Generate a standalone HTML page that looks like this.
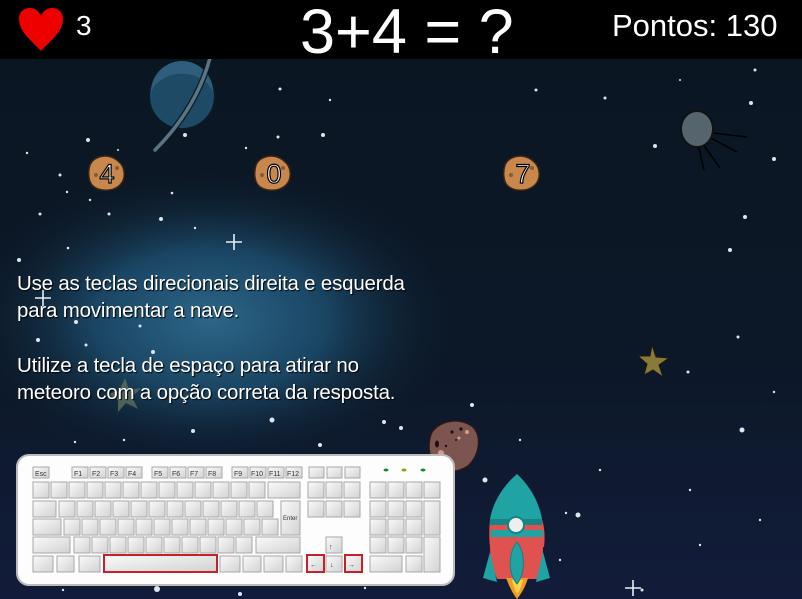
<!DOCTYPE html>
<html><head><meta charset="utf-8"><style>
html,body{margin:0;padding:0;width:802px;height:599px;overflow:hidden;background:#0b1622;font-family:"Liberation Sans",sans-serif}
#bg{position:absolute;left:0;top:0}
.hdr{position:absolute;left:0;top:0;width:802px;height:59px;background:#000;color:#fff;overflow:hidden}
.t{position:absolute;color:#fff;white-space:nowrap}
.txt{position:absolute;left:17px;color:#fff;font-size:20.5px;letter-spacing:-0.2px;text-shadow:1px 1px 1px #000;line-height:27px;white-space:nowrap}
</style></head><body>
<svg id="bg" width="802" height="599" viewBox="0 0 802 599">
<defs>
<radialGradient id="glow" cx="210" cy="320" r="260" gradientUnits="userSpaceOnUse" gradientTransform="translate(210 320) scale(1 0.6) translate(-210 -320)">
<stop offset="0" stop-color="#2c6688"/><stop offset="0.45" stop-color="#1a4563"/><stop offset="1" stop-color="#0b1622" stop-opacity="0"/></radialGradient>
<linearGradient id="sky" x1="0" y1="0" x2="0" y2="1"><stop offset="0" stop-color="#0b1622"/><stop offset="0.6" stop-color="#0c1828"/><stop offset="1" stop-color="#121c3a"/></linearGradient>
<linearGradient id="key" x1="0" y1="0" x2="1" y2="1"><stop offset="0" stop-color="#fafafa"/><stop offset="1" stop-color="#d2d2d2"/></linearGradient>
</defs>
<rect width="802" height="599" fill="url(#sky)"/>
<rect width="802" height="599" fill="url(#glow)"/>
<g fill="#dfe6ea">
<circle cx="60" cy="175" r="1.5"/><circle cx="90" cy="200" r="1.2"/><circle cx="88" cy="140" r="2"/><circle cx="118" cy="150" r="1"/><circle cx="185" cy="135" r="2"/><circle cx="280" cy="89" r="1.5"/><circle cx="330" cy="100" r="1.2"/><circle cx="323" cy="135" r="2"/><circle cx="278" cy="137" r="1.5"/><circle cx="246" cy="148" r="1.2"/><circle cx="27" cy="153" r="1.2"/><circle cx="67" cy="192" r="1.2"/><circle cx="172" cy="193" r="1.3"/>
<circle cx="40" cy="214" r="1.5"/><circle cx="109" cy="214" r="1.5"/><circle cx="161" cy="219" r="2"/><circle cx="195" cy="228" r="1.2"/><circle cx="19" cy="260" r="2"/><circle cx="68" cy="248" r="1.3"/><circle cx="38" cy="340" r="2"/><circle cx="76" cy="322" r="2"/><circle cx="140" cy="326" r="1.5"/><circle cx="153" cy="352" r="2"/><circle cx="86" cy="345" r="1.5"/>
<circle cx="272" cy="420" r="2.5"/><circle cx="193" cy="431" r="2"/><circle cx="320" cy="445" r="2"/><circle cx="384" cy="422" r="2"/><circle cx="401" cy="428" r="2"/><circle cx="472" cy="405" r="2"/><circle cx="450" cy="468" r="2"/><circle cx="485" cy="480" r="2.5"/><circle cx="402" cy="457" r="1.2"/><circle cx="75" cy="442" r="1.2"/><circle cx="124" cy="440" r="1.2"/>
<circle cx="605" cy="98" r="1.5"/><circle cx="655" cy="146" r="2"/><circle cx="774" cy="159" r="2"/><circle cx="751" cy="103" r="2"/><circle cx="745" cy="217" r="2"/><circle cx="730" cy="250" r="2"/><circle cx="738" cy="337" r="1.5"/><circle cx="688" cy="372" r="1.5"/><circle cx="742" cy="430" r="2.5"/><circle cx="774" cy="392" r="1.2"/><circle cx="536" cy="90" r="1.5"/><circle cx="755" cy="70" r="1.5"/><circle cx="680" cy="80" r="1"/>
<circle cx="578" cy="515" r="2.5"/><circle cx="566" cy="513" r="1.2"/><circle cx="560" cy="560" r="1.2"/><circle cx="642" cy="590" r="1.5"/><circle cx="700" cy="545" r="1.2"/><circle cx="760" cy="520" r="1.2"/><circle cx="600" cy="470" r="1.2"/><circle cx="690" cy="490" r="1.2"/><circle cx="520" cy="440" r="1.2"/><circle cx="157" cy="589" r="3"/><circle cx="240" cy="594" r="2"/><circle cx="63" cy="590" r="1.2"/><circle cx="365" cy="588" r="1.2"/>
</g>
<g stroke="#e8eef2" stroke-width="1.6"><path d="M234 234v16M226 242h16"/><path d="M43 290v16M35 298h16"/><path d="M633 580v16M625 588h16"/></g>
<!-- planet -->
<circle cx="182" cy="96" r="33" fill="#1e4a66" stroke="#0a1a26" stroke-width="2"/>
<path d="M151 92a31 31 0 0 1 62 0a33 28 0 0 0 -62 0z" fill="#2f5e7c"/>
<path d="M210 58 C200 95 180 125 155 150" stroke="#0a1a26" stroke-width="6" fill="none" stroke-linecap="round"/>
<path d="M210 58 C200 95 180 125 155 150" stroke="#5a7482" stroke-width="3.5" fill="none" stroke-linecap="round"/>
<!-- satellite -->
<g stroke="#000" stroke-width="1.5"><path d="M705 132l42 5M705 135l32 17M700 140l20 28M697 140l7 30"/></g>
<ellipse cx="697" cy="129" rx="16" ry="18" fill="#56656d" stroke="#111" stroke-width="2"/>
<!-- starfish -->
<path d="M652 345l4 12 13 1-10 7 4 12-10-7-9 5 3-11-9-8 12 0z" fill="#8a7a3a" stroke="#1c1a10"/>
<path d="M125 378l4 12 12-2-9 9 6 12-12-6-8 9 0-12-11-6 12-3z" fill="#5d6e5c" opacity="0.8"/>
<!-- brown meteor -->
<path d="M432 432c10-14 32-14 42-4 8 10 5 28-6 38-12 8-30 8-36-6-4-8-4-20 0-28z" fill="#7c5450" stroke="#2a1818" stroke-width="1.5"/>
<g fill="#1c1010"><ellipse cx="437" cy="444" rx="2" ry="3.5"/><circle cx="452" cy="432" r="1.6"/><circle cx="461" cy="429" r="1.6"/><circle cx="446" cy="446" r="1.2"/><circle cx="456" cy="440" r="1"/></g>
<g fill="#d79a8a"><circle cx="441" cy="453" r="3"/><circle cx="467" cy="432" r="2"/><circle cx="459" cy="438" r="1.5"/></g>
<!-- number meteors -->
<g stroke="#3a2512" stroke-width="1.5" fill="#c8874c">
<path d="M90 165c4-10 20-12 28-4 8 6 8 18 2 24-7 7-22 7-28 0-4-5-4-14-2-20z"/>
<path d="M256 165c4-10 20-12 28-4 8 6 8 18 2 24-7 7-22 7-28 0-4-5-4-14-2-20z"/>
<path d="M505 165c4-10 20-12 28-4 8 6 8 18 2 24-7 7-22 7-28 0-4-5-4-14-2-20z"/>
</g>
<g fill="#8a5a30"><circle cx="96" cy="175" r="2"/><circle cx="117" cy="168" r="2"/><circle cx="262" cy="175" r="2"/><circle cx="283" cy="168" r="2"/><circle cx="511" cy="175" r="2"/><circle cx="532" cy="168" r="2"/></g>
<g font-family="Liberation Sans,sans-serif" font-size="27" fill="#fff" stroke="#000" stroke-width="1.2" text-anchor="middle">
<text x="107" y="183">4</text><text x="274" y="183">0</text><text x="523" y="183">7</text></g>
<!-- rocket -->
<path d="M517 474c-14 12-24 28-27 45l52 0c-3-17-12-33-25-45z" fill="#1fa3a3"/>
<path d="M490 519c-1 10-1 20 0 28h54c1-8 1-18-2-28z" fill="#e0524f"/>
<rect x="490" y="519" width="52" height="6" fill="#158585"/>
<path d="M491 530h52v7h-52z" fill="#1fa3a3"/>
<path d="M490 547c0 12 3 22 7 32h40c4-10 6-20 6-32z" fill="#e0524f"/>
<circle cx="516" cy="525" r="8" fill="#eee" stroke="#158585" stroke-width="2"/>
<path d="M490 552l-7 26 14 4z" fill="#1fa3a3"/><path d="M543 552l7 26-14 4z" fill="#1fa3a3"/>
<path d="M506 578c4 10 7 16 11 21 4-5 8-11 11-21z" fill="#f39a21"/>
<path d="M512 580c2 8 4 12 5 14 2-2 4-6 6-14z" fill="#ffd34a"/>
<path d="M517 542c-8 10-10 30 0 42 9-12 8-32 0-42z" fill="#1fa3a3" stroke="#128080"/>
<!-- keyboard -->
<rect x="17" y="455" width="437" height="130" rx="12" fill="#fdfdfd" stroke="#bbb" stroke-width="2"/>
<g fill="url(#key)" stroke="#a8a8a8" stroke-width="1">
<rect x="33" y="467" width="16" height="11"/>
<rect x="72" y="467" width="16" height="11"/><rect x="90" y="467" width="16" height="11"/><rect x="108" y="467" width="16" height="11"/><rect x="126" y="467" width="16" height="11"/>
<rect x="152" y="467" width="16" height="11"/><rect x="170" y="467" width="16" height="11"/><rect x="188" y="467" width="16" height="11"/><rect x="206" y="467" width="16" height="11"/>
<rect x="232" y="467" width="16" height="11"/><rect x="250" y="467" width="16" height="11"/><rect x="268" y="467" width="16" height="11"/><rect x="286" y="467" width="16" height="11"/>
<rect x="309" y="467" width="15" height="11"/><rect x="327" y="467" width="15" height="11"/><rect x="345" y="467" width="15" height="11"/>
<rect x="33" y="482" width="16" height="16"/><rect x="51" y="482" width="16" height="16"/><rect x="69" y="482" width="16" height="16"/><rect x="87" y="482" width="16" height="16"/><rect x="105" y="482" width="16" height="16"/><rect x="123" y="482" width="16" height="16"/><rect x="141" y="482" width="16" height="16"/><rect x="159" y="482" width="16" height="16"/><rect x="177" y="482" width="16" height="16"/><rect x="195" y="482" width="16" height="16"/><rect x="213" y="482" width="16" height="16"/><rect x="231" y="482" width="16" height="16"/><rect x="249" y="482" width="16" height="16"/><rect x="268" y="482" width="32" height="16"/>
<rect x="33" y="501" width="23" height="16"/><rect x="59" y="501" width="16" height="16"/><rect x="77" y="501" width="16" height="16"/><rect x="95" y="501" width="16" height="16"/><rect x="113" y="501" width="16" height="16"/><rect x="131" y="501" width="16" height="16"/><rect x="149" y="501" width="16" height="16"/><rect x="167" y="501" width="16" height="16"/><rect x="185" y="501" width="16" height="16"/><rect x="203" y="501" width="16" height="16"/><rect x="221" y="501" width="16" height="16"/><rect x="239" y="501" width="16" height="16"/><rect x="257" y="501" width="16" height="16"/><rect x="281" y="501" width="19" height="34"/>
<rect x="33" y="519" width="28" height="16"/><rect x="64" y="519" width="16" height="16"/><rect x="82" y="519" width="16" height="16"/><rect x="100" y="519" width="16" height="16"/><rect x="118" y="519" width="16" height="16"/><rect x="136" y="519" width="16" height="16"/><rect x="154" y="519" width="16" height="16"/><rect x="172" y="519" width="16" height="16"/><rect x="190" y="519" width="16" height="16"/><rect x="208" y="519" width="16" height="16"/><rect x="226" y="519" width="16" height="16"/><rect x="244" y="519" width="16" height="16"/><rect x="262" y="519" width="16" height="16"/>
<rect x="33" y="537" width="37" height="16"/><rect x="74" y="537" width="16" height="16"/><rect x="92" y="537" width="16" height="16"/><rect x="110" y="537" width="16" height="16"/><rect x="128" y="537" width="16" height="16"/><rect x="146" y="537" width="16" height="16"/><rect x="164" y="537" width="16" height="16"/><rect x="182" y="537" width="16" height="16"/><rect x="200" y="537" width="16" height="16"/><rect x="218" y="537" width="16" height="16"/><rect x="236" y="537" width="16" height="16"/><rect x="256" y="537" width="44" height="16"/>
<rect x="33" y="556" width="20" height="16"/><rect x="57" y="556" width="17" height="16"/><rect x="79" y="556" width="21" height="16"/><rect x="220" y="556" width="20" height="16"/><rect x="243" y="556" width="18" height="16"/><rect x="264" y="556" width="19" height="16"/><rect x="286" y="556" width="16" height="16"/>
<rect x="308" y="482" width="16" height="16"/><rect x="326" y="482" width="16" height="16"/><rect x="344" y="482" width="16" height="16"/>
<rect x="308" y="501" width="16" height="16"/><rect x="326" y="501" width="16" height="16"/><rect x="344" y="501" width="16" height="16"/>
<rect x="326" y="537" width="16" height="16"/><rect x="326" y="556" width="16" height="16"/>
<rect x="370" y="482" width="16" height="16"/><rect x="388" y="482" width="16" height="16"/><rect x="406" y="482" width="16" height="16"/><rect x="424" y="482" width="16" height="16"/>
<rect x="370" y="501" width="16" height="16"/><rect x="388" y="501" width="16" height="16"/><rect x="406" y="501" width="16" height="16"/><rect x="424" y="501" width="16" height="34"/>
<rect x="370" y="519" width="16" height="16"/><rect x="388" y="519" width="16" height="16"/><rect x="406" y="519" width="16" height="16"/>
<rect x="370" y="537" width="16" height="16"/><rect x="388" y="537" width="16" height="16"/><rect x="406" y="537" width="16" height="16"/><rect x="424" y="537" width="16" height="35"/>
<rect x="370" y="556" width="32" height="16"/><rect x="406" y="556" width="16" height="16"/>
</g>
<g fill="url(#key)" stroke="#c8202a" stroke-width="2">
<rect x="104" y="555" width="113" height="17"/><rect x="307" y="555" width="17" height="17"/><rect x="345" y="555" width="17" height="17"/>
</g>
<g fill="#1a8a2a"><ellipse cx="386" cy="470" rx="2.5" ry="1.5"/><ellipse cx="423" cy="470" rx="2.5" ry="1.5"/></g><ellipse cx="404" cy="470" rx="2.5" ry="1.5" fill="#9a9a10"/>
<g font-family="Liberation Sans,sans-serif" font-size="7" fill="#333">
<text x="35" y="476">Esc</text><text x="74" y="476">F1</text><text x="92" y="476">F2</text><text x="110" y="476">F3</text><text x="128" y="476">F4</text><text x="154" y="476">F5</text><text x="172" y="476">F6</text><text x="190" y="476">F7</text><text x="208" y="476">F8</text><text x="234" y="476">F9</text><text x="251" y="476">F10</text><text x="269" y="476">F11</text><text x="287" y="476">F12</text>
<text x="283" y="520" font-size="6">Enter</text>
<text x="329" y="549">↑</text><text x="310" y="567">←</text><text x="330" y="567">↓</text><text x="348" y="567">→</text>
</g>
</svg>
<div class="hdr">
<svg style="position:absolute;left:18px;top:7px" width="46" height="44" viewBox="0 0 46 44"><path d="M23 44C14 34 1 25 1 12 1 5 6 1 12 1c5 0 9 3 11 8 2-5 6-8 11-8 6 0 11 4 11 11 0 13-13 22-22 32z" fill="#ee0000"/></svg>
<div class="t" style="left:76px;top:10px;font-size:28px">3</div>
<div class="t" style="left:300px;top:-4px;font-size:63px">3+4 = ?</div>
<div class="t" style="left:612px;top:8px;font-size:31px">Pontos: 130</div>
</div>
<div class="txt" style="top:270px">Use as teclas direcionais direita e esquerda<br>para movimentar a nave.</div>
<div class="txt" style="top:352px">Utilize a tecla de espaço para atirar no<br>meteoro com a opção correta da resposta.</div>
</body></html>
